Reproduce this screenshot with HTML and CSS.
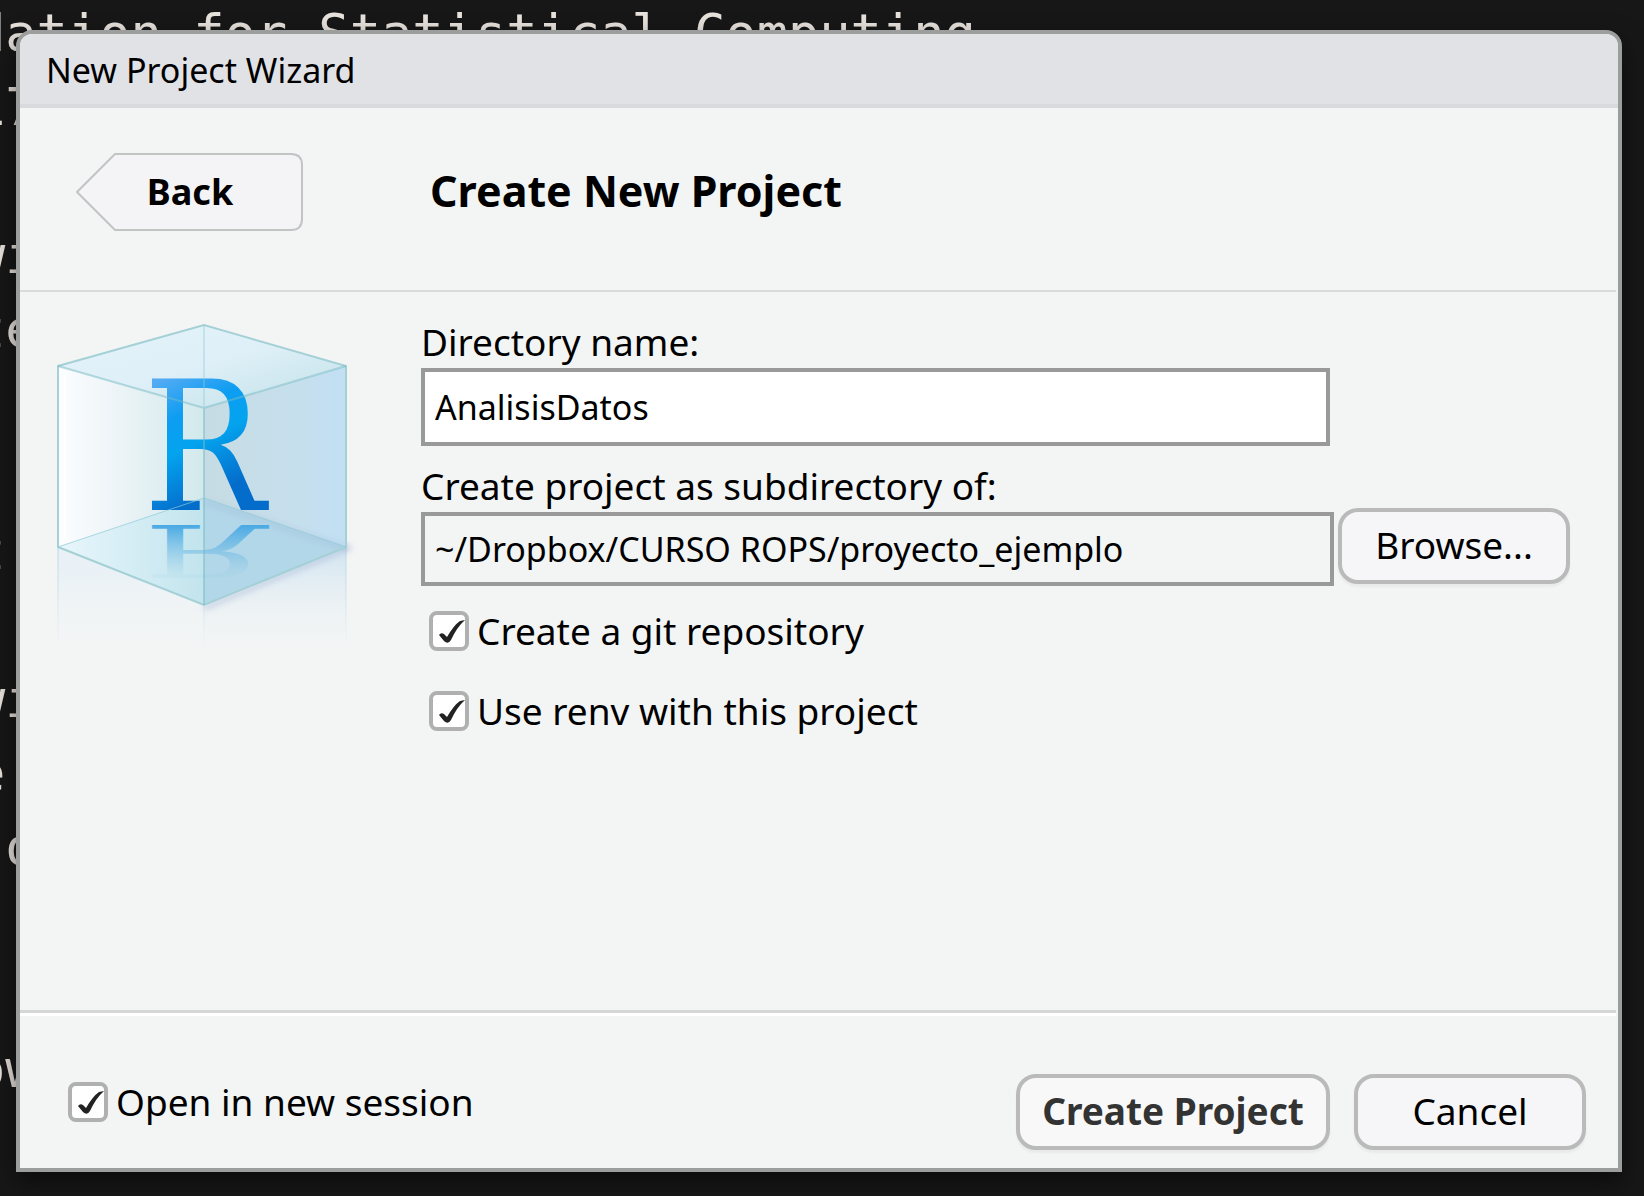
FILE: index.html
```html
<!DOCTYPE html>
<html lang="en">
<head>
<meta charset="utf-8">
<meta name="viewport" content="width=device-width, initial-scale=1">
<title>New Project Wizard</title>
<link rel="stylesheet" href="styles.css">
</head>
<body>
<pre class="console">dation for Statistical Computing
17

wi
te
)

t

wi
e
 o


ow</pre>
<form class="dialog">
  <header class="titlebar">New Project Wizard</header>
  <div class="heading">
    <button type="button" class="back">
      <svg class="back-shape" viewBox="0 0 228 78" aria-hidden="true">
        <path d="M39 1H215Q226 1 226 12V66Q226 77 215 77H39L1 39Z" fill="#f4f4f7" stroke="#c2c4c4" stroke-width="2"/>
      </svg>
      <span class="back-text">Back</span>
    </button>
    <h1 class="page-title">Create New Project</h1>
  </div>
  <main class="content">
    <svg class="cube" viewBox="0 0 300 350" aria-hidden="true">
      <defs>
        <linearGradient id="left" x1="0" x2="1"><stop offset="0" stop-color="#fcfdff"/><stop offset=".4" stop-color="#edf4f7"/><stop offset="1" stop-color="#d2e9ec"/></linearGradient>
        <linearGradient id="right" x1="0" x2="1"><stop offset="0" stop-color="#c6dce4"/><stop offset=".6" stop-color="#c6dfec"/><stop offset="1" stop-color="#c2dff4"/></linearGradient>
        <linearGradient id="top" x1="0" x2="1" y2="1"><stop offset="0" stop-color="#e4f4fb"/><stop offset=".5" stop-color="#deeff7"/><stop offset="1" stop-color="#bfe0e8"/></linearGradient>
        <linearGradient id="floor" x1="0" x2="1"><stop offset="0" stop-color="#e8f6fc"/><stop offset="1" stop-color="#c2e4ed"/></linearGradient>
        <linearGradient id="letter" x1="0" y1="0" x2=".3" y2="1"><stop offset=".2" stop-color="#53abf3"/><stop offset=".4" stop-color="#0d9df2"/><stop offset=".55" stop-color="#04a4ef"/><stop offset=".82" stop-color="#046dcb"/></linearGradient>
        <linearGradient id="mirror" x1="0" y1="1" x2="0" y2="0"><stop offset=".2" stop-color="#48a9e4"/><stop offset=".78" stop-color="#7fc1e4" stop-opacity=".1"/></linearGradient>
        <linearGradient id="fadeLeft" x1="0" x2="0" y1="0" y2="1"><stop offset=".2" stop-color="#e9f1f6"/><stop offset="1" stop-color="#f3f5f5" stop-opacity="0"/></linearGradient>
        <linearGradient id="fadeRight" x1="0" x2="0" y1="0" y2="1"><stop offset=".1" stop-color="#d7e7f2"/><stop offset="1" stop-color="#f3f5f5" stop-opacity="0"/></linearGradient>
        <linearGradient id="edgeFade" gradientUnits="userSpaceOnUse" x1="0" x2="0" y1="220" y2="325"><stop offset="0" stop-color="#b4d6e4"/><stop offset="1" stop-color="#b4d6e4" stop-opacity="0"/></linearGradient>
        <filter id="soft" x="-20%" y="-20%" width="140%" height="140%"><feGaussianBlur stdDeviation="3"/></filter>
      </defs>
      <path d="M3 222 149 280V334H3Z" fill="url(#fadeLeft)"/>
      <path d="M149 280 291 222V334H149Z" fill="url(#fadeRight)"/>
      <path d="M3 222V330M149 280V330M291 222V330" fill="none" stroke="url(#edgeFade)" stroke-width="1"/>
      <path d="M149 176 294 223 149 283" fill="none" stroke="#8d9fca" stroke-width="3" opacity=".6" filter="url(#soft)"/>
      <path d="M3 41 149 83V173L3 222Z" fill="url(#left)"/>
      <path d="M9 50V214H11V50Z" fill="#fff" opacity=".8"/>
      <path d="M149 83 291 41V222L149 173Z" fill="url(#right)"/>
      <path d="M3 41 149 0 291 41 149 83Z" fill="url(#top)"/>
      <path d="M3 222 149 173V280Z" fill="url(#floor)"/>
      <path d="M149 173 291 222 149 280Z" fill="#b2d7e8"/>
      <path d="M149 176 291 223" fill="none" stroke="#8d9fca" stroke-width="3" opacity=".35" filter="url(#soft)"/>
      <text class="cube-letter" x="88" y="185" fill="url(#letter)">R</text>
      <text class="cube-letter" transform="translate(88 200) scale(1 -.4)" x="0" y="0" fill="url(#mirror)">R</text>
      <path d="M3 41 149 0 291 41V222L149 280 3 222Z" fill="none" stroke="#a4d0d6" stroke-width="2"/>
      <path d="M3 41 149 83 291 41M149 83V280" fill="none" stroke="#75bac4" stroke-width="2" opacity=".5"/>
      <path d="M149 0V83M3 222 149 173 291 222" fill="none" stroke="#8ccbd6" stroke-width="1" opacity=".7"/>
    </svg>
    <div class="fields">
      <label class="label" for="dir">Directory name:</label>
      <input class="input input-name" id="dir" type="text" value="AnalisisDatos">
      <label class="label" for="parent">Create project as subdirectory of:</label>
      <div class="browse-row">
        <input class="input input-path" id="parent" type="text" readonly value="~/Dropbox/CURSO ROPS/proyecto_ejemplo">
        <button type="button" class="button">Browse...</button>
      </div>
      <div class="options">
        <label class="option"><input class="check" type="checkbox" checked>Create a git repository</label>
        <label class="option"><input class="check" type="checkbox" checked>Use renv with this project</label>
      </div>
    </div>
  </main>
  <footer class="footer">
    <label class="option"><input class="check" type="checkbox" checked>Open in new session</label>
    <div class="actions">
      <button type="button" class="button button-primary">Create Project</button>
      <button type="button" class="button">Cancel</button>
    </div>
  </footer>
</form>
</body>
</html>
```
FILE: styles.css
```css
* {
  box-sizing: border-box;
}

body {
  margin: 0;
  min-height: 100vh;
  display: flex;
  padding: 30px 22px 24px 16px;
  background: #171717;
  color: #000;
  font: 37px/48px "Noto Sans", sans-serif;
  position: relative;
  overflow-x: hidden;
}

/* Terminal output behind the dialog */
.console {
  position: absolute;
  top: -4px;
  left: -26px;
  margin: 0;
  color: #e8e2dd;
  font: 52px/74px "DejaVu Sans Mono", monospace;
}

.dialog {
  position: relative;
  flex: 1;
  min-width: 0;
  display: flex;
  flex-direction: column;
  border: 4px solid #9c9d9d;
  border-radius: 16px 16px 0 0;
  background: #f3f5f5;
  box-shadow: 0 10px 24px rgba(0, 0, 0, 0.5);
}

.titlebar {
  height: 74px;
  padding: 12px 26px 10px;
  border-bottom: 4px solid #d8dadd;
  border-radius: 12px 12px 0 0;
  background: #e1e2e6;
  font-size: 34px;
}

.heading {
  display: flex;
  align-items: flex-start;
  height: 184px;
  padding: 45px 56px;
  margin-right: 2px;
  border-bottom: 2px solid #d8dadc;
}

.back {
  position: relative;
  width: 228px;
  height: 78px;
  padding: 0;
  border: 0;
  background: none;
  color: #000;
  font: bold 36px/48px "Noto Sans", sans-serif;
}

.back-shape {
  position: absolute;
  inset: 0;
  width: 228px;
  height: 78px;
}

.back-text {
  position: relative;
}

.page-title {
  margin: 10px 0 0 126px;
  font-size: 43px;
  line-height: 56px;
}

.content {
  flex: 1;
  display: flex;
  padding: 24px 48px 24px 35px;
}

.cube {
  flex: none;
  width: 300px;
  height: 350px;
  margin: 9px 66px 0 0;
  overflow: visible;
}

.cube-letter {
  font: 180px "DejaVu Serif Condensed", "DejaVu Serif", serif;
}

.fields {
  flex: 1;
  min-width: 0;
  display: flex;
  flex-direction: column;
}

.label {
  line-height: 52px;
}

.input {
  min-width: 0;
  margin: 0;
  padding: 0 10px;
  border: 4px solid #999;
  border-radius: 0;
  outline: 0;
  background: #fff;
  color: #000;
  font: 34px "Noto Sans", sans-serif;
}

.input-name {
  height: 78px;
  margin: 0 240px 14px 0;
}

.browse-row {
  display: flex;
  gap: 4px;
}

.input-path {
  flex: 1;
  height: 74px;
  background: #f3f5f5;
}

.browse-row .button {
  margin-top: -4px;
}

.button {
  width: 232px;
  height: 76px;
  padding: 0 0 2px;
  border: 4px solid #bababa;
  border-radius: 20px;
  background: #f6f6f9;
  box-shadow: 0 3px 2px #e9eaea;
  color: #000;
  font: 37px/48px "Noto Sans", sans-serif;
}

.button-primary {
  width: 314px;
  background: #f8f8f8;
  color: #333;
  font-weight: bold;
}

.options {
  display: flex;
  flex-direction: column;
  gap: 32px;
  padding: 21px 8px;
}

.option {
  display: flex;
  align-items: center;
  gap: 8px;
}

.check {
  appearance: none;
  flex: none;
  width: 40px;
  height: 40px;
  margin: 0;
  border: 4px solid #b0b0b0;
  border-radius: 8px;
  background: #fff;
}

.check:checked {
  background: #fff url("data:image/svg+xml,%3Csvg xmlns='http://www.w3.org/2000/svg' viewBox='0 0 32 32'%3E%3Cpath d='M6 20Q8 17 11 19L14 22Q21 10 27 6L32 5Q24 12 18 25Q15 30 11 26Z' fill='%23222'/%3E%3C/svg%3E") center / 32px 32px no-repeat;
}

.footer {
  display: flex;
  justify-content: space-between;
  align-items: flex-start;
  height: 158px;
  margin-right: 2px;
  padding: 61px 30px 0 48px;
  border-top: 3px solid #d5d7d7;
  box-shadow: inset 0 3px 0 #fff;
}

.footer .option {
  margin-top: 4px;
}

.actions {
  display: flex;
  gap: 24px;
}
```
